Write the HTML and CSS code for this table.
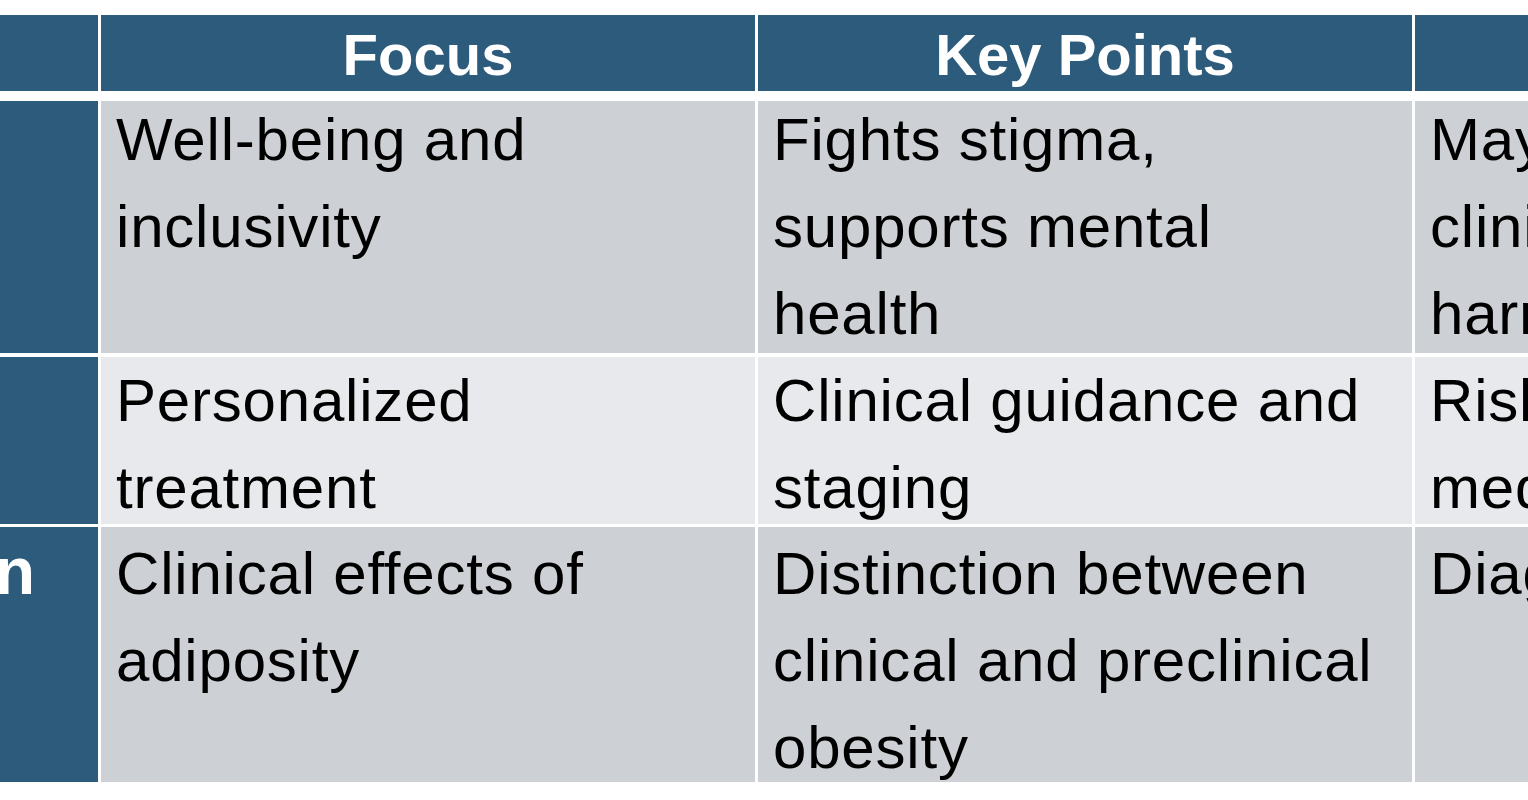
FILE: index.html
```html
<!DOCTYPE html>
<html lang="en">
<head>
<meta charset="utf-8">
<title>Obesity frameworks</title>
<link rel="stylesheet" href="styles.css">
</head>
<body>
<div class="table">
  <div class="row head">
    <div class="cell label">Approach</div>
    <div class="cell">Focus</div>
    <div class="cell">Key Points</div>
    <div class="cell">Criticisms</div>
  </div>
  <div class="row r1">
    <div class="cell label"><div class="txt">Body Positivity</div></div>
    <div class="cell"><div class="txt">Well-being and<br>inclusivity</div></div>
    <div class="cell"><div class="txt">Fights stigma,<br>supports mental<br>health</div></div>
    <div class="cell"><div class="txt">May overlook<br>clinical<br>harms</div></div>
  </div>
  <div class="row r2">
    <div class="cell label"><div class="txt">Obesity Medicine</div></div>
    <div class="cell"><div class="txt">Personalized<br>treatment</div></div>
    <div class="cell"><div class="txt">Clinical guidance and<br>staging</div></div>
    <div class="cell"><div class="txt">Risk of over-<br>medicalization</div></div>
  </div>
  <div class="row r3">
    <div class="cell label"><div class="txt">Lancet Commission</div></div>
    <div class="cell"><div class="txt">Clinical effects of<br>adiposity</div></div>
    <div class="cell"><div class="txt">Distinction between<br>clinical and preclinical<br>obesity</div></div>
    <div class="cell"><div class="txt">Diagnostic complexity</div></div>
  </div>
</div>
</body>
</html>
```

FILE: styles.css
```css
html, body {
  margin: 0;
  padding: 0;
  background: #ffffff;
  overflow: hidden;
  width: 1528px;
  height: 800px;
}

.table {
  display: flex;
  flex-direction: column;
  width: max-content;
  margin-top: 15px;
  margin-left: -607px;
  font-family: "Liberation Sans", Arial, sans-serif;
}

.row {
  display: grid;
  grid-template-columns: 705px 654px 654px 640px;
  grid-template-rows: minmax(0, 1fr);
  column-gap: 3px;
  flex: none;
}

.cell {
  min-height: 0;
  padding: 0 15px;
  overflow: hidden;
  color: #000000;
  font-size: 60px;
  line-height: 87px;
  letter-spacing: 0.8px;
  white-space: nowrap;
}

.head {
  height: 76px;
  margin-bottom: 10px;
}

.head .cell {
  background: #2d5b7c;
  color: #ffffff;
  font-weight: bold;
  font-size: 58px;
  letter-spacing: 0;
  line-height: 72px;
  text-align: center;
  padding-top: 4px;
}

.r1 { height: 252px; margin-bottom: 4px; }
.r2 { height: 167px; margin-bottom: 3px; }
.r3 { height: 255px; }

.r1 .cell, .r3 .cell { background: #cdd1d5; }
.r2 .cell { background: #e7e9ec; }

.row .label {
  background: #2d5b7c;
  color: #ffffff;
  font-weight: bold;
  font-size: 66px;
  letter-spacing: 0;
}

.r1 .txt { margin-top: -5px; }
.r2 .txt { margin-top: 0; }
.r3 .txt { margin-top: 3px; }
.r3 .label .txt { margin-top: 1px; }
```
